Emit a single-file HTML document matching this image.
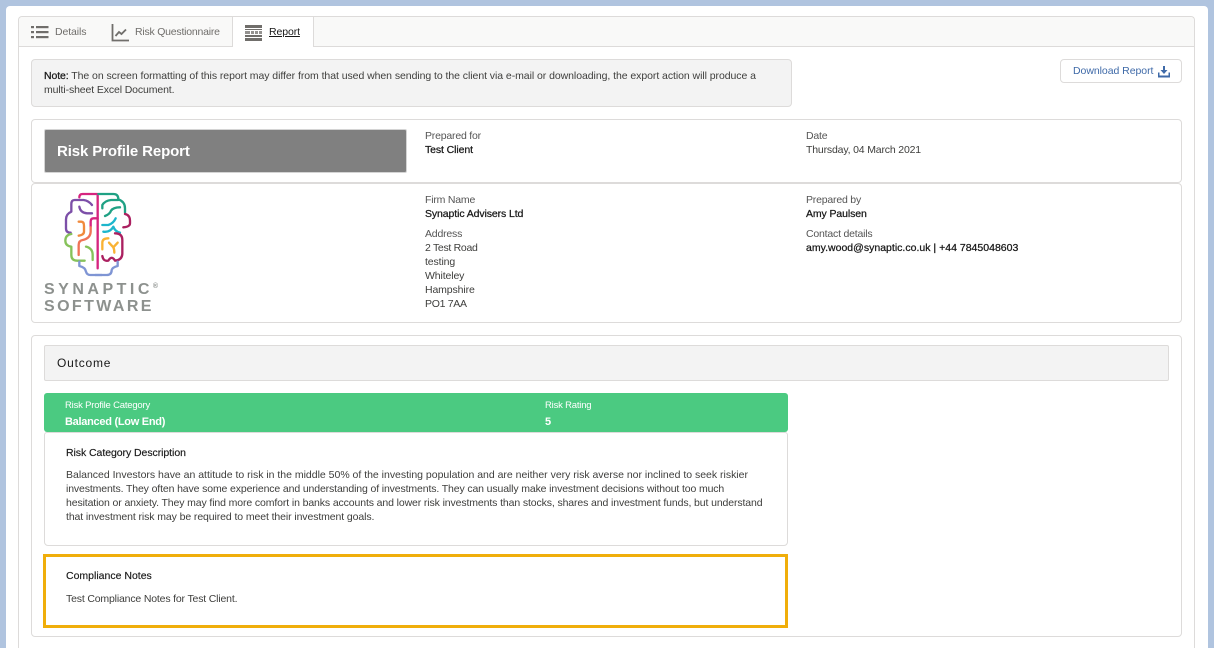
<!DOCTYPE html>
<html><head><meta charset="utf-8"><style>
html,body{margin:0;padding:0;height:648px;overflow:hidden}
body{width:1214px;position:relative;background:#b0c4df;font-family:"Liberation Sans",sans-serif;font-size:10.5px;color:#3e3e3c}
div{box-sizing:border-box}
.a{position:absolute}
.t{position:absolute;white-space:nowrap;line-height:14px;letter-spacing:-.12px}
.box{position:absolute;background:#fff;border:1px solid #dddbda;border-radius:4px}
.b{color:#181818;-webkit-text-stroke:.25px #181818;letter-spacing:-.1px}
.l{color:#555;letter-spacing:-.2px}
</style></head><body>
<div class="a" style="left:6px;top:6px;width:1202px;height:642px;background:#fff;border-radius:4px 4px 0 0"></div>
<div class="box" style="left:18px;top:16px;width:1177px;height:632px;border-bottom:none;border-radius:4px 4px 0 0"></div>
<div class="a" style="left:19px;top:17px;width:1175px;height:30px;background:#f9f9f8;border-bottom:1px solid #dddbda;border-radius:4px 4px 0 0"></div>
<div class="a" style="left:232px;top:17px;width:82px;height:30px;background:#fff;border-left:1px solid #dddbda;border-right:1px solid #dddbda"></div>
<svg class="a" style="left:31px;top:25px" width="18" height="15" fill="#706e6b"><rect x="0" y="1" width="3" height="2.200"/><rect x="5" y="1" width="12.500" height="2.200"/><rect x="0" y="6" width="3" height="2.200"/><rect x="5" y="6" width="12.500" height="2.200"/><rect x="0" y="11" width="3" height="2.200"/><rect x="5" y="11" width="12.500" height="2.200"/></svg>
<div class="t" style="left:55px;top:25px;color:#706e6b;letter-spacing:-.1px">Details</div>
<svg class="a" style="left:111px;top:24px" width="19" height="18" fill="none" stroke="#706e6b" stroke-width="1.800"><path d="M1.500 0V16.500H18"/><path d="M4.500 12L8 8L10.500 10L15 5.500" stroke-width="1.800"/></svg>
<div class="t" style="left:135px;top:25px;color:#706e6b;letter-spacing:-.22px">Risk Questionnaire</div>
<svg class="a" style="left:245px;top:24px" width="18" height="18" fill="#706e6b"><rect x="0" y="1" width="17" height="3"/><rect x="0" y="5" width="17" height="1"/><rect x="0" y="7" width="17" height="3" opacity=".75"/><rect x="0" y="11" width="17" height="2"/><rect x="0" y="14" width="17" height="3"/><path d="M5 7h1v3H5zM9 7h1v3H9zM13 7h1v3h-1z" fill="#fff"/></svg>
<div class="t" style="left:269px;top:25px;color:#181818;text-decoration:underline;letter-spacing:-.1px">Report</div>

<div class="a" style="left:31px;top:59px;width:761px;height:48px;background:#f3f3f3;border:1px solid #dddbda;border-radius:4px"></div>
<div class="t" style="left:44px;top:69px;letter-spacing:-.06px"><span class="b">Note:</span> The on screen formatting of this report may differ from that used when sending to the client via e-mail or downloading, the export action will produce a</div>
<div class="t" style="left:44px;top:83px">multi-sheet Excel Document.</div>

<div class="a" style="left:1060px;top:59px;width:122px;height:24px;background:#fff;border:1px solid #dddbda;border-radius:4px"></div>
<div class="t" style="left:1073px;top:64px;color:#3f6aa8;letter-spacing:-.05px">Download Report</div>
<svg class="a" style="left:1158px;top:66px" width="12" height="12" fill="#3f6aa8"><path d="M5 0h2v4h2.500L6 8 2.500 4H5z"/><path d="M0 6.500h1.500V9.500h9V6.500H12V11.500H0z"/></svg>

<div class="box" style="left:31px;top:119px;width:1151px;height:64px"></div>
<div class="a" style="left:44px;top:129px;width:363px;height:44px;background:#808080;border:1px solid #d4d4d4;border-radius:2px"></div>
<div class="t" style="left:57px;top:143px;color:#fff;font-size:15px;font-weight:bold;line-height:18px;letter-spacing:-.12px">Risk Profile Report</div>
<div class="t l" style="left:425px;top:129px">Prepared for</div>
<div class="t b" style="left:425px;top:143px">Test Client</div>
<div class="t l" style="left:806px;top:129px">Date</div>
<div class="t" style="left:806px;top:143px;letter-spacing:-.17px">Thursday, 04 March 2021</div>

<div class="box" style="left:31px;top:183px;width:1151px;height:140px"></div>
<svg class="a" style="left:61.500px;top:190px" width="40" height="88" viewBox="0 0 120 264" fill="none" stroke-width="7" stroke-linecap="round" stroke-linejoin="round">
<path stroke="#d6247f" d="M107 235V12H62Q52 12 52 22"/>
<path stroke="#d6247f" d="M107 85H95Q86 85 86 95V110"/>
<path stroke="#7c4fa8" d="M50 30H38Q28 30 28 42V65Q12 72 12 88V115Q12 128 26 128"/>
<path stroke="#7c4fa8" d="M52 50Q55 68 75 70H90M52 30H65Q80 32 90 45"/>
<path stroke="#86c25a" d="M28 132Q10 135 10 152Q10 168 28 170V195Q28 212 46 212H68"/>
<path stroke="#86c25a" d="M72 170Q92 175 92 195V210"/>
<path stroke="#f08a3c" d="M50 95H58Q66 95 66 108V125Q66 135 50 137"/>
<path stroke="#ef7356" d="M50 195V165Q50 152 62 150Q85 145 86 125V112"/>
<path stroke="#7f95d4" d="M52 215V228Q70 232 72 245Q75 255 85 255H120"/>
</svg>
<svg class="a" style="left:95px;top:190px" width="40" height="88" viewBox="0 0 120 264" fill="none" stroke-width="7" stroke-linecap="round" stroke-linejoin="round">
<path stroke="#1fa184" d="M10 12H55Q70 12 70 28Q90 35 90 55V68"/>
<path stroke="#1fa184" d="M22 55V45Q30 32 48 30H70"/>
<path stroke="#1fa184" d="M30 78Q45 72 48 62Q55 52 75 52"/>
<path stroke="#1db6cc" d="M22 105H40Q55 100 62 85M25 125Q45 128 55 110Q60 125 75 128"/>
<path stroke="#ab2060" d="M90 72Q105 75 105 92V100Q105 110 85 112"/>
<path stroke="#ab2060" d="M60 130Q82 130 82 150V190Q82 210 60 212Q50 195 40 212Q25 215 22 198"/>
<path stroke="#f9b233" d="M22 178V158Q22 145 40 145M42 158L55 172Q58 178 58 188M68 158L55 172"/>
<path stroke="#7f95d4" d="M0 255H35Q50 255 50 240Q52 232 68 228V215"/>
</svg>
<div class="t" style="left:44px;top:280px;font-size:16px;line-height:20px;font-weight:bold;color:#8d918e;letter-spacing:3.500px">SYNAPTIC<span style="font-size:7px;letter-spacing:0;position:relative;top:-6px">®</span></div>
<div class="t" style="left:44px;top:297px;font-size:16px;line-height:20px;font-weight:bold;color:#8d918e;letter-spacing:2.400px">SOFTWARE</div>

<div class="t l" style="left:425px;top:193px">Firm Name</div>
<div class="t b" style="left:425px;top:207px;letter-spacing:-.1px">Synaptic Advisers Ltd</div>
<div class="t l" style="left:425px;top:227px">Address</div>
<div class="t" style="left:425px;top:241px;letter-spacing:-.3px">2 Test Road</div>
<div class="t" style="left:425px;top:255px">testing</div>
<div class="t" style="left:425px;top:269px">Whiteley</div>
<div class="t" style="left:425px;top:283px">Hampshire</div>
<div class="t" style="left:425px;top:297px;letter-spacing:-.3px">PO1 7AA</div>
<div class="t l" style="left:806px;top:193px">Prepared by</div>
<div class="t b" style="left:806px;top:207px">Amy Paulsen</div>
<div class="t l" style="left:806px;top:227px">Contact details</div>
<div class="t b" style="left:806px;top:241px;letter-spacing:.01px">amy.wood@synaptic.co.uk | +44 7845048603</div>

<div class="box" style="left:31px;top:335px;width:1151px;height:302px"></div>
<div class="a" style="left:44px;top:345px;width:1125px;height:36px;background:#f3f3f3;border:1px solid #dddbda;border-radius:2px"></div>
<div class="t" style="left:57px;top:355px;font-size:12px;line-height:16px;color:#181818;letter-spacing:.8px">Outcome</div>

<div class="a" style="left:44px;top:393px;width:744px;height:39px;background:#4bca81;border-radius:3px"></div>
<div class="t" style="left:65px;top:399px;color:#fff;font-size:9.500px;letter-spacing:-.2px">Risk Profile Category</div>
<div class="t" style="left:65px;top:415px;color:#fff;font-size:11px;font-weight:bold;letter-spacing:-.28px">Balanced (Low End)</div>
<div class="t" style="left:545px;top:399px;color:#fff;font-size:9.500px;letter-spacing:-.2px">Risk Rating</div>
<div class="t" style="left:545px;top:415px;color:#fff;font-size:11px;font-weight:bold">5</div>

<div class="a" style="left:44px;top:432px;width:744px;height:114px;background:#fff;border:1px solid #dddbda;border-radius:3px 3px 4px 4px"></div>
<div class="t" style="left:66px;top:446px;color:#181818;letter-spacing:-.06px;-webkit-text-stroke:.15px #181818">Risk Category Description</div>
<div class="t" style="left:66px;top:468px;letter-spacing:-.01px">Balanced Investors have an attitude to risk in the middle 50% of the investing population and are neither very risk averse nor inclined to seek riskier</div>
<div class="t" style="left:66px;top:482px;letter-spacing:-.13px">investments. They often have some experience and understanding of investments. They can usually make investment decisions without too much</div>
<div class="t" style="left:66px;top:496px;letter-spacing:-.12px">hesitation or anxiety. They may find more comfort in banks accounts and lower risk investments than stocks, shares and investment funds, but understand</div>
<div class="t" style="left:66px;top:510px;letter-spacing:-.1px">that investment risk may be required to meet their investment goals.</div>

<div class="a" style="left:43px;top:554px;width:745px;height:74px;background:#fff;border:3px solid #f0ae0a"></div>
<div class="t" style="left:66px;top:569px;color:#181818;letter-spacing:0;-webkit-text-stroke:.15px #181818">Compliance Notes</div>
<div class="t" style="left:66px;top:592px;letter-spacing:-.17px">Test Compliance Notes for Test Client.</div>
</body></html>
